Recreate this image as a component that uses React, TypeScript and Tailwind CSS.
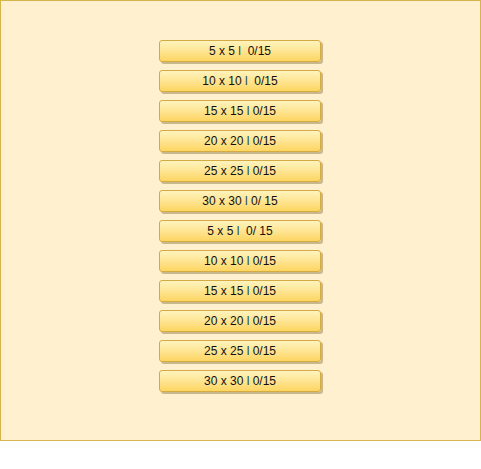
const levels = [
  { size: "5 x 5", score: "  0/15" },
  { size: "10 x 10", score: "  0/15" },
  { size: "15 x 15", score: " 0/15" },
  { size: "20 x 20", score: " 0/15" },
  { size: "25 x 25", score: " 0/15" },
  { size: "30 x 30", score: " 0/ 15" },
  { size: "5 x 5", score: "  0/ 15" },
  { size: "10 x 10", score: " 0/15" },
  { size: "15 x 15", score: " 0/15" },
  { size: "20 x 20", score: " 0/15" },
  { size: "25 x 25", score: " 0/15" },
  { size: "30 x 30", score: " 0/15" },
];

export default function App() {
  return (
    <div className="w-[481px] h-[469px] bg-white" style={{ fontFamily: '"Liberation Sans", Arial, sans-serif' }}>
      <div className="w-[481px] h-[441px] border border-[#d8b44c] bg-[#fff1cf] flex flex-col items-center pt-[39px] gap-[8px]">
        {levels.map((l, i) => (
          <button
            key={i}
            className="w-[162px] h-[22px] rounded-[3px] border border-[#d4ab42] bg-gradient-to-b from-[#fff3bd] to-[#fdd660] shadow-[2px_2px_0_#c9b88c] text-[12px] text-[#111] leading-none flex items-center justify-center -ml-[1px]"
          >
            <span className="whitespace-pre">
              {l.size + " "}
              <span className="text-[#164b57]">l</span>
              {l.score}
            </span>
          </button>
        ))}
      </div>
    </div>
  );
}
